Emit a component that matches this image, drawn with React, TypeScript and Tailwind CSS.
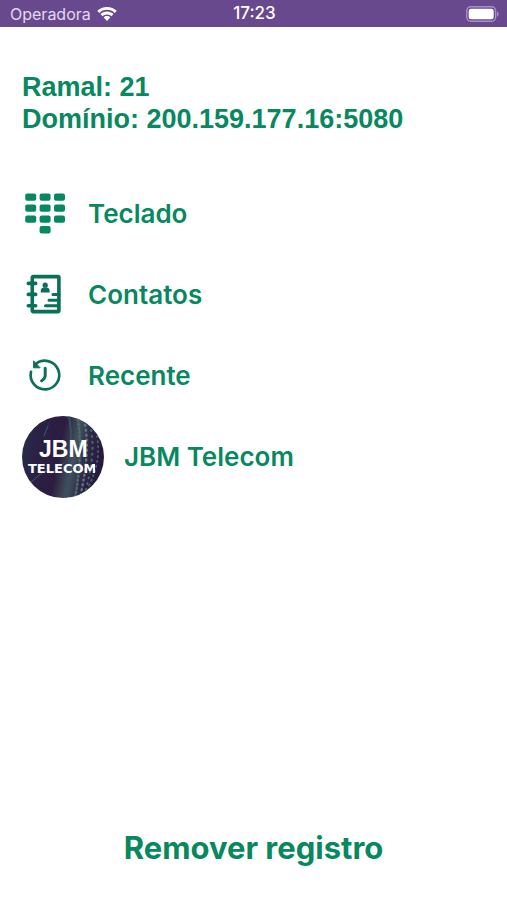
import React from 'react';

interface MenuRowProps {
  icon: React.ReactNode;
  label: string;
}

const WifiIcon: React.FC = () => (
  <svg viewBox="0 0 20 15" className="w-5 h-4" fill="#ffffff" aria-hidden="true">
    <path d="M10 0.4C6.2 0.4 2.8 1.9 0.3 4.3L2.3 6.4C4.3 4.5 7 3.3 10 3.3s5.7 1.2 7.7 3.1l2-2.1C17.2 1.9 13.8 0.4 10 0.4z" />
    <path d="M10 5C7.5 5 5.2 6 3.5 7.6l2 2.1C6.7 8.6 8.3 7.9 10 7.9s3.3 0.7 4.5 1.8l2-2.1C14.8 6 12.5 5 10 5z" />
    <path d="M10 9.6c-1.3 0-2.4 0.5-3.3 1.3L10 14.4l3.3-3.5C12.4 10.1 11.3 9.6 10 9.6z" />
  </svg>
);

const BatteryIcon: React.FC = () => (
  <svg viewBox="0 0 33 16" className="w-[33px] h-4" fill="none" aria-hidden="true">
    <rect x="0.8" y="0.8" width="28.8" height="14.4" rx="4" stroke="#a792c4" strokeWidth="1.4" />
    <rect x="2.7" y="2.7" width="25" height="10.6" rx="2.4" fill="#ffffff" />
    <path d="M31 5.5c1.1 0.4 1.6 1.4 1.6 2.5s-0.5 2.1-1.6 2.5z" fill="#a792c4" />
  </svg>
);

const KeypadIcon: React.FC = () => (
  <svg viewBox="0 0 44 42" className="w-11 h-[42px]" fill="#07885f" aria-hidden="true">
    {[0, 1, 2].map((row) =>
      [0, 1, 2].map((col) => (
        <rect key={`${row}-${col}`} x={3.2 + col * 14.4} y={0.4 + row * 11} width="11" height="7.4" rx="2" />
      ))
    )}
    <rect x="17.6" y="33" width="11" height="7.4" rx="2" />
  </svg>
);

const ContactsIcon: React.FC = () => (
  <svg viewBox="0 0 44 42" className="w-11 h-[42px]" fill="none" stroke="#0b7059" aria-hidden="true">
    <rect x="10.3" y="2.6" width="26.6" height="35" rx="1" strokeWidth="3.6" />
    <path d="M6.3 9.4h7.4M6.3 20.4h7.4M6.3 31.8h7.4" strokeWidth="3.6" strokeLinecap="round" />
    <path d="M31 20.4h6M27 26.2h10M23.5 31.8h13" strokeWidth="3" strokeLinecap="round" />
    <circle cx="23.2" cy="11.2" r="2.6" fill="#0b7059" stroke="none" />
    <path d="M18.8 18.4v-1.8c0-2 1.5-3 3-3h2.8c1.6 0 3 1 3 3v1.8z" fill="#0b7059" stroke="none" />
  </svg>
);

const HistoryIcon: React.FC = () => (
  <svg viewBox="0 0 44 42" className="w-11 h-[42px]" fill="none" stroke="#0b7059" strokeWidth="2.7" strokeLinecap="round" aria-hidden="true">
    <path d="M9 16.8A14.3 14.3 0 1 0 13.4 9.4" />
    <path d="M11.6 6.2v6.6h6.2z" fill="#0b7059" stroke="#0b7059" strokeWidth="1" />
    <path d="M23.2 13.2v7.4c0 1.6-0.6 2.7-1.6 3.6l-2 1.6" strokeWidth="3" />
  </svg>
);

const Logo: React.FC = () => (
  <svg viewBox="0 0 82 82" className="w-[82px] h-[82px] rounded-full" aria-hidden="true">
    <defs>
      <linearGradient id="logoBg" x1="0" y1="0" x2="1" y2="0.2">
        <stop offset="0" stopColor="#25304a" />
        <stop offset="0.25" stopColor="#2b2145" />
        <stop offset="0.52" stopColor="#2c1c40" />
        <stop offset="0.7" stopColor="#42525d" />
        <stop offset="0.85" stopColor="#2e2848" />
        <stop offset="1" stopColor="#281a3e" />
      </linearGradient>
      <clipPath id="wordClip">
        <rect x="0" y="0" width="73" height="82" />
      </clipPath>
    </defs>
    <rect width="82" height="82" fill="url(#logoBg)" />
    <g fill="none" strokeLinecap="round">
      <path d="M47 0c4 22 2 50-3 82" stroke="#35505f" strokeWidth="2" />
      <path d="M55 0c5 20 3 55-2 82" stroke="#4e6a6e" strokeWidth="2.5" strokeDasharray="1 3" />
      <path d="M62 4c5 22 3 46-4 78" stroke="#5b757a" strokeWidth="2.5" strokeDasharray="1 4" />
      <path d="M68 8c5 22 2 42-5 70" stroke="#4e6b72" strokeWidth="2" strokeDasharray="1 5" />
      <path d="M75 20c3 20 0 32-8 50" stroke="#455d66" strokeWidth="2" strokeDasharray="1 4" />
      <path d="M8 67l14-12 8 2 12-10M26 10l-4 10" stroke="#2b6476" strokeWidth="1" />
    </g>
    <g fill="#ffffff" fontWeight="700">
      <text x="17" y="41" fontSize="23" fontFamily="'Liberation Sans', sans-serif">JBM</text>
      <g clipPath="url(#wordClip)">
        <text x="6" y="57" fontSize="13" fontFamily="'DejaVu Sans', sans-serif">TELECOM</text>
      </g>
    </g>
  </svg>
);

const MenuRow: React.FC<MenuRowProps> = ({ icon, label }) => (
  <button type="button" className="flex items-center gap-[22px] h-[81px] w-full text-left">
    {icon}
    <span>{label}</span>
  </button>
);

const App: React.FC = () => {
  return (
    <div className="min-h-screen flex flex-col bg-white text-[#07885f] font-['Inter',sans-serif]">
      <header className="grid grid-cols-3 items-center h-[27px] pl-[10px] pr-2 bg-[#68498d] text-white text-base">
        <div className="flex items-center gap-[6px] text-[#e3d9ee]">
          <span>Operadora</span>
          <WifiIcon />
        </div>
        <span className="text-center text-[17px] font-medium">17:23</span>
        <div className="flex justify-end">
          <BatteryIcon />
        </div>
      </header>

      <main className="flex-1 flex flex-col px-[22px] pt-11">
        <div className="text-[27px] leading-8 font-bold font-['Liberation_Sans',sans-serif]">
          <p>Ramal: 21</p>
          <p>Domínio: 200.159.177.16:5080</p>
        </div>

        <nav className="flex flex-col mt-[38px] text-[26px] font-semibold">
          <MenuRow icon={<KeypadIcon />} label="Teclado" />
          <MenuRow icon={<ContactsIcon />} label="Contatos" />
          <MenuRow icon={<HistoryIcon />} label="Recente" />
          <button type="button" className="flex items-center gap-5 h-[81px] w-full text-left">
            <Logo />
            <span>JBM Telecom</span>
          </button>
        </nav>
      </main>

      <footer className="flex justify-center pb-8">
        <button type="button" className="text-[31px] leading-10 font-bold">Remover registro</button>
      </footer>
    </div>
  );
};

export default App;
